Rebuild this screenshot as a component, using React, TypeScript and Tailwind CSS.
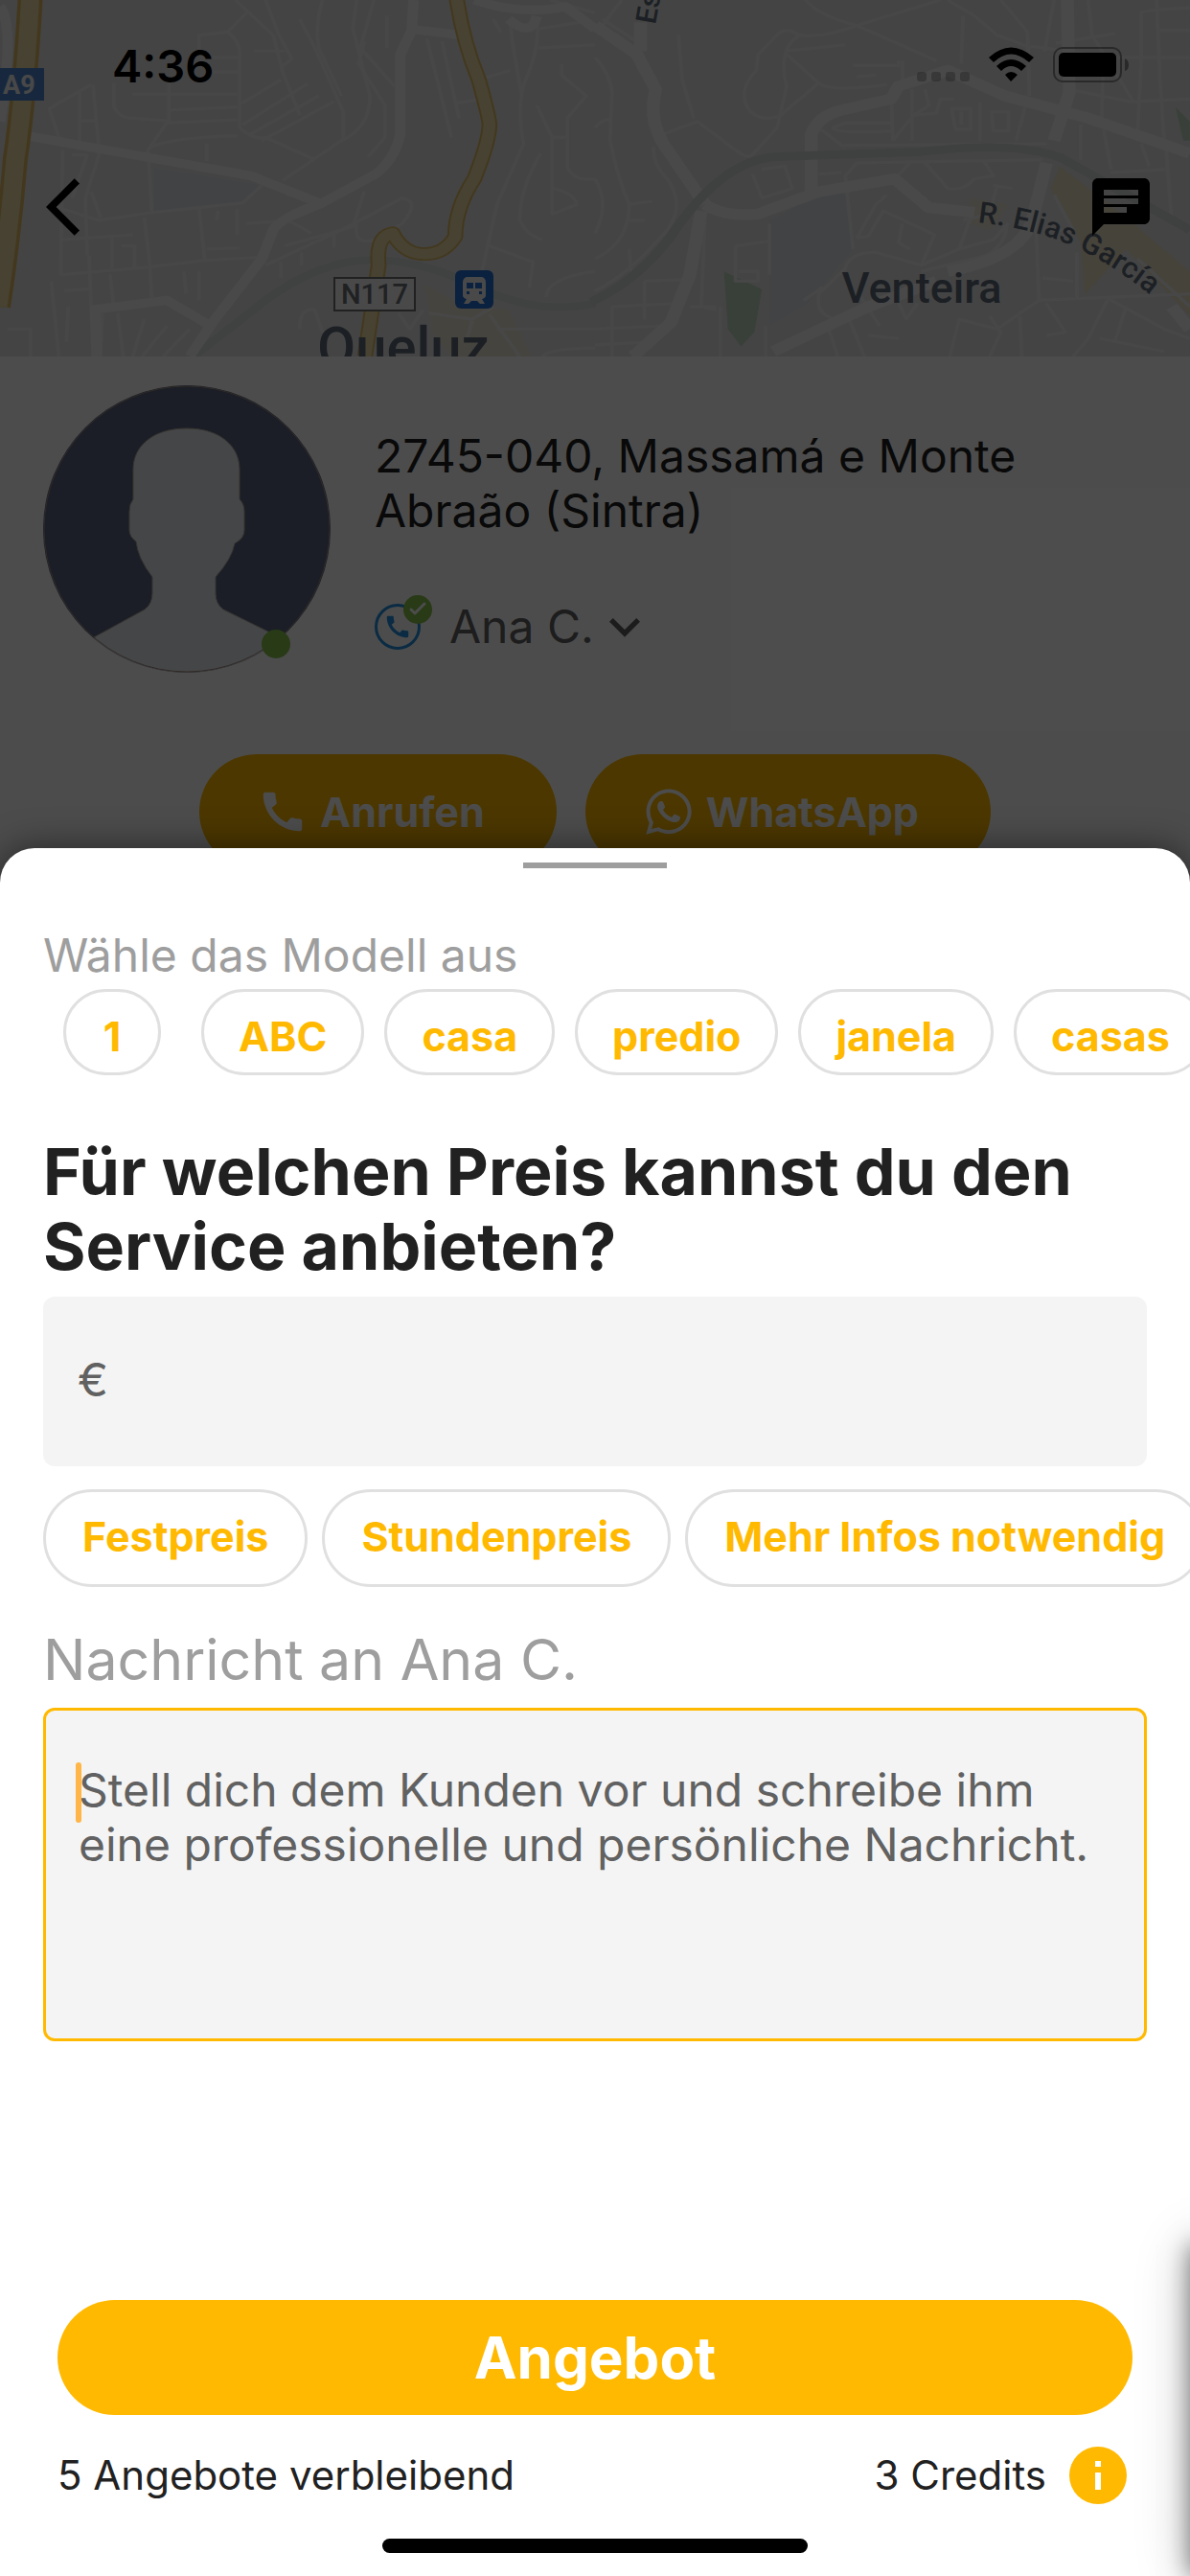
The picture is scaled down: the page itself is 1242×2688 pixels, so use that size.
import { useState } from 'react';
import { MdArrowBackIos, MdCall, MdChat, MdExpandMore } from 'react-icons/md';
import { FaWhatsapp } from 'react-icons/fa';

interface Template {
  id: number;
  label: string;
  text: string;
}

const TEMPLATES: Template[] = [
  { id: 1, label: '1', text: '' },
  { id: 2, label: 'ABC', text: '' },
  { id: 3, label: 'casa', text: '' },
  { id: 4, label: 'predio', text: '' },
  { id: 5, label: 'janela', text: '' },
  { id: 6, label: 'casas', text: '' },
];

const PRICE_TYPES = ['Festpreis', 'Stundenpreis', 'Mehr Infos notwendig'];

// West half of the map
const WEST_MINOR = [
  'M620 0L720 110L745 225L790 360', 'M650 40L600 100L525 110V160', 'M600 100Q635 130 632 180V400Q670 440 700 430L830 500',
  'M700 0L735 110L770 185L740 210', 'M790 60L830 150L905 350V440', 'M850 0Q830 80 840 150L900 300',
  'M940 0L930 90L975 300Q975 400 900 440L745 565', 'M985 0L950 150L1040 270', 'M1020 50V150', 'M960 130L945 200L1015 330V430L970 490',
  'M670 160H750', 'M560 225H630', 'M560 180H630', 'M350 295H625', 'M440 345L625 335', 'M440 385L625 375',
  'M635 325L740 250', 'M640 390L810 262', 'M660 420L840 300', 'M690 440L880 318',
  'M300 260V330Q310 370 350 370L440 378', 'M445 260V375L390 470L400 660', 'M390 465Q440 430 625 425', 'M240 265L130 340L155 430L265 480',
  'M210 290V470', 'M245 265L262 480L225 620L230 800', 'M210 378H255', 'M165 470L160 860', 'M190 485H230L190 620', 'M545 450V505',
  'M130 640L260 690L400 665L640 635L690 580', 'M240 600L265 680', 'M380 680L395 830', 'M525 655L540 815', 'M625 655V735', 'M575 660L570 690',
  'M165 750L350 735', 'M160 860L380 838L540 815L690 805', 'M295 745V840', 'M320 770H355V840', 'M545 780L630 776', 'M170 910L235 905',
  'M135 880L155 1116', 'M180 960L175 1070', 'M235 800L240 960', 'M290 860L300 960', 'M395 840L400 930', 'M485 850L490 920', 'M525 850V940',
  'M20 1030H80V1116', 'M270 980L265 1116', 'M310 980L325 1116', 'M380 1000L350 1116', 'M440 1020L375 1116', 'M500 1030L430 1116',
  'M960 600L930 710L750 770', 'M650 700L760 690L820 730', 'M700 830L900 720L1060 620Q1110 630 1060 700L990 750Q930 770 940 700',
  'M740 820V870', 'M795 790V830', 'M880 730V775', 'M1125 120L1190 430', 'M1165 130L1210 370', 'M1275 245L1345 220', 'M1205 322L1260 312',
  'M1345 60L1350 130L1375 300', 'M1420 150L1568 140', 'M1415 50Q1425 150 1385 250Q1360 330 1380 450L1310 640L1270 850',
  'M1415 330L1455 430V670L1520 640Q1510 600 1455 590', 'M1480 200V235L1545 300L1495 370V520Q1510 570 1568 560',
  'M1425 480Q1370 590 1370 690Q1390 740 1430 750', 'M1455 430H1500', 'M1290 770L1405 820L1395 900', 'M1440 930Q1440 870 1568 850',
  'M1310 1030H1568', 'M1115 970L1080 1030L1050 980', 'M790 1030Q790 960 830 970L850 1040', 'M1130 980L1245 1000L1300 960', 'M1245 1005L1230 1060',
  'M1290 985L1370 1116', 'M1450 0L1568 40', 'M1420 90L1530 70', 'M1430 1116Q1450 1090 1568 1090', 'M1300 60L1320 100',
];
const WEST_MAJOR = [
  'M70 425L400 495L660 550L850 640', 'M1090 0L1085 95L1055 170V420Q1040 500 990 545L850 635Q740 680 720 720L690 810L560 1010L500 1116',
  'M850 635L760 680', 'M240 970L440 940L555 1020', 'M250 960L255 1116', 'M1075 90L1215 110', 'M1250 0Q1380 50 1490 20L1568 90', 'M0 20Q40 80 0 380',
  'M1340 60Q1400 120 1415 50',
];

// East half of the map
const EAST_MINOR = [
  'M555 0Q590 50 690 80L900 190', 'M910 0L690 80Q600 120 540 110Q480 150 505 270L480 400L410 490Q390 490 370 470L270 380L180 420',
  'M540 110Q500 80 480 110L430 170L425 220Q370 290 410 350Q440 380 480 365', 'M500 165L590 260Q620 290 770 265', 'M480 370L590 260',
  'M500 160L660 140', 'M220 110L230 250L260 370', 'M0 180Q40 230 45 290L40 440Q60 560 90 640Q90 760 0 810', 'M20 80L70 0', 'M20 60L110 130',
  'M155 460Q150 510 190 560Q240 640 190 720Q90 860 0 910', 'M0 400Q20 370 40 375', 'M0 560Q40 640 0 730', 'M930 0L1000 50L1060 110L1150 150',
  'M970 50L965 200', 'M1070 0L1140 100L1145 300', 'M1210 0L1185 160', 'M1300 0L1310 110L1420 320', 'M1215 135L1370 105', 'M1150 145L1370 180H1568',
  'M1440 180V40Q1450 30 1568 25', 'M1480 0L1490 260L1500 440', 'M1440 180L1430 420', 'M1490 95H1568', 'M1340 190L1335 380', 'M1250 280L1410 318L1568 310',
  'M780 280L785 440', 'M835 280V440', 'M785 440L840 360L900 355L910 310H945', 'M870 280L880 330L840 360', 'M940 340H990V405H950Z', 'M965 350V390', 'M1015 320V440',
  'M1045 350H1090V410H1050Z', 'M1135 330L1110 440', 'M1110 320L1230 350', 'M625 400L660 385H780', 'M625 400Q640 420 780 410', 'M590 400L650 455L1190 450',
  'M1280 390V500', 'M1340 400L1360 530', 'M1440 450L1460 520', 'M1505 460L1520 700', 'M1360 540L1505 530', 'M660 550L690 510L1180 500', 'M660 550L680 780',
  'M830 510L790 560', 'M870 510L930 590Q970 600 1000 560L1050 550L1025 505', 'M680 205H800V190', 'M690 240L740 235', 'M810 190V250',
  'M415 545L440 620L520 590L500 520L440 530', 'M590 545L650 540', 'M370 770L460 755', 'M370 770V880H430V850H380', 'M460 700V860', 'M290 690L280 960L320 970',
  'M250 960H320', 'M45 960V1116', 'M130 880V1000', 'M0 1030L180 1020', 'M0 1080L150 1070', 'M130 880L235 875', 'M330 960V1116', 'M45 960L210 950',
  'M90 640L150 630', 'M90 690H130', 'M90 780L95 850', 'M690 745L740 640L770 610', 'M690 745L720 740L760 660L895 735L860 830', 'M810 700L800 760L830 780',
  'M990 680L960 780L860 830L740 790Q670 790 660 840L590 920Q580 990 640 1000', 'M1060 580L1040 670L970 690', 'M1050 580L1100 590',
  'M860 850L1030 800Q1080 770 1085 710', 'M960 780L1050 750L1090 700', 'M1160 640L1170 940L1568 920', 'M1170 940L1060 1030L960 1000L935 1116',
  'M1180 870L1260 880', 'M1270 790V930', 'M1345 930L1500 1030L1568 1060', 'M1400 960L1370 1070', 'M1350 940L1300 1060L1260 1116', 'M1190 950L1240 1040L1190 1050',
  'M1120 990L1125 1116', 'M1040 990L1070 1040L1040 1116', 'M820 1000L850 950', 'M700 930L750 1020', 'M790 920L820 1000', 'M670 1000L710 1116', 'M610 1010L640 1116',
  'M720 1050L800 1060', 'M1330 1060L1500 1100', 'M1210 610L1260 720H1200', 'M1430 810L1568 960', 'M450 1020V1116', 'M550 940L600 900',
];
const EAST_MAJOR = [
  'M0 80L110 170L160 280Q140 370 180 450L290 640', 'M120 70V160', 'M290 640Q340 680 430 670L590 600L790 560L880 650L1000 665', 'M570 600V420Q590 360 650 345L780 310L800 270L930 220L1080 300L1300 370L1568 480',
  'M280 660L250 860L200 1010L100 1116', 'M1190 510L1150 700Q1110 810 930 850', 'M470 1100L720 960L900 880', 'M1245 0L1250 290L1210 440', 'M1520 960L1568 1030',
];

function MapView() {
  return (
    <svg aria-hidden="true" className="absolute inset-0 size-full" viewBox="0 0 1242 372" preserveAspectRatio="xMidYMin slice">
      <rect width="1242" height="372" fill="#e4e4e4" />
      <g transform="scale(0.396 0.3333)" fill="none" strokeLinejoin="round">
        <path d="M405 525L690 580L640 635L405 660Z" fill="#dde2e8" />
        <path d="M1120 890L1220 960L1340 970L1400 1116H1190L1140 1040Z" fill="#ece5d2" />
        <path d="M510 1116L700 940Q860 800 1010 815Q1130 820 1290 915Q1430 985 1568 950" stroke="#d6d9db" strokeWidth="24" />
        <g stroke="#efefef" strokeWidth="9">
          {WEST_MINOR.map(d => <path key={d} d={d} />)}
        </g>
        <g stroke="#f3f3f3" strokeWidth="28">
          {WEST_MAJOR.map(d => <path key={d} d={d} />)}
        </g>
        <g stroke="#e0bc64" strokeWidth="42">
          <path d="M80 -10Q65 300 40 500Q25 720 -5 960" strokeWidth="66" />
          <path d="M1203 -10Q1220 130 1262 250Q1290 370 1290 390Q1290 440 1250 560Q1200 650 1200 740Q1170 800 1110 795Q1060 790 1035 730Q990 740 998 830L962 1116" />
        </g>
        <g stroke="#eedca4" strokeWidth="32">
          <path d="M80 -10Q65 300 40 500Q25 720 -5 960" strokeWidth="48" />
          <path d="M1203 -10Q1220 130 1262 250Q1290 370 1290 390Q1290 440 1250 560Q1200 650 1200 740Q1170 800 1110 795Q1060 790 1035 730Q990 740 998 830L962 1116" />
        </g>
      </g>
      <g transform="translate(621 0) scale(0.396 0.3333)" fill="none" strokeLinejoin="round">
        <path d="M460 690L570 620L670 600L675 790L560 950L460 1020Z" fill="#dde2e8" />
        <path d="M340 850L440 905L420 1040L385 1085L350 1030Z" fill="#c0d6c2" />
        <path d="M1530 335L1568 380V440L1550 440Z" fill="#c0d6c2" />
        <path d="M1225 520L1400 680L1568 850V990L1400 780L1290 925L1280 760L1200 590Z" fill="#ece0c6" />
        <path d="M990 620L1090 640L1040 720L990 700Z" fill="#ece5d2" />
        <g stroke="#efefef" strokeWidth="9">
          {EAST_MINOR.map(d => <path key={d} d={d} />)}
        </g>
        <g stroke="#f3f3f3" strokeWidth="34">
          {EAST_MAJOR.map(d => <path key={d} d={d} />)}
        </g>
        <path d="M-10 945Q110 880 200 740Q340 490 490 490L860 475Q1110 440 1230 495L1568 720" stroke="#d3d5d6" strokeWidth="26" />
      </g>

      <rect x="-8" y="71" width="54" height="34" fill="#4f86d0" />
      <rect x="349" y="290" width="84" height="34" fill="#f6f6f6" stroke="#707070" strokeWidth="2" />
      <rect x="475" y="282" width="40" height="40" rx="6" fill="#2470d4" />
      <path d="M487 289H503Q507 290 507 295V308Q507 311 503 312L506 317H501L498 314H492L489 317H484L487 312Q483 311 483 308V295Q483 290 487 289ZM487 295V301H494V295ZM496 295V301H503V295ZM487 304V307H490V304ZM500 304V307H503V304Z" fill="#f6f6f6" fillRule="evenodd" />
      <path id="road-label" d="M1020 232Q1090 240 1130 262Q1170 281 1215 320" fill="none" />
      <g className="font-[Roboto,sans-serif]" fill="#5f6d7a">
        <text x="3" y="98" fontSize="27" fontWeight="700" fill="#f2f2f2">A9</text>
        <text x="391" y="317" fontSize="29" fontWeight="500" fill="#6c7175" textAnchor="middle">N117</text>
        <text x="421" y="382" fontSize="58" fontWeight="500" textAnchor="middle">Queluz</text>
        <text x="962" y="316" fontSize="45" fontWeight="500" textAnchor="middle">Venteira</text>
        <text transform="translate(684 26) rotate(-80)" fontSize="30" fontWeight="500">Es</text>
        <text fontSize="31" fontWeight="500"><textPath href="#road-label">R. Elias García</textPath></text>
      </g>
    </svg>
  );
}

function StatusBar() {
  return (
    <div className="flex h-[132px] items-center justify-between pt-[6px] pr-16 pl-[117px]">
      <span className="text-[47px] leading-[56px] font-semibold text-black">4:36</span>
      <svg aria-hidden="true" className="h-10 w-[224px]" viewBox="0 0 224 40">
        <g fillOpacity="0.22">
          <rect x="3" y="26" width="10" height="10" rx="3" />
          <rect x="18" y="26" width="10" height="10" rx="3" />
          <rect x="33" y="26" width="10" height="10" rx="3" />
          <rect x="48" y="26" width="10" height="10" rx="3" />
        </g>
        <path d="M78 11Q101 -10 125 11L120 16Q101 -1 83 16ZM86 20Q101 6 117 20L112 25Q101 15 91 25ZM95 29Q101 23 108 29L101 36Z" />
        <rect x="146" y="1" width="70" height="35" rx="9" fill="none" stroke="#000" strokeOpacity="0.4" strokeWidth="2" />
        <rect x="151" y="6" width="60" height="25" rx="5" />
        <path d="M220 12Q224 14 224 19Q224 24 220 25Z" fillOpacity="0.4" />
      </svg>
    </div>
  );
}

function Avatar() {
  return (
    <div className="relative size-[300px] shrink-0">
      <svg aria-hidden="true" className="size-full" viewBox="0 0 300 300">
        <clipPath id="avatar-clip"><circle cx="150" cy="150" r="150" /></clipPath>
        <g clipPath="url(#avatar-clip)">
          <rect width="300" height="300" fill="#5a647f" />
          <path
            d="M150 45C184 45 205 63 205 88V119Q210 124 210 132V151Q210 160 200 165Q197 181 180 200V217Q180 228 188 234L247 263V300H53V263L106 234Q114 228 114 217V200Q99 181 97 163Q90 158 90 151V132Q90 124 94 119V88C94 63 115 45 150 45Z"
            fill="#e7e9ed" stroke="#b5aea6" strokeWidth="1"
          />
        </g>
        <circle cx="150" cy="150" r="149" fill="none" stroke="#a08c80" strokeWidth="1" />
      </svg>
      <span className="absolute right-[42px] bottom-[15px] size-[30px] rounded-full bg-[#85c14a]" />
    </div>
  );
}

function Chip({ label, className, onClick }: { label: string; className: string; onClick: () => void }) {
  return (
    <button
      type="button"
      onClick={onClick}
      className={`shrink-0 rounded-full border-[3px] border-[#e0e0e0] bg-white text-[43px] leading-[50px] font-bold whitespace-nowrap text-[#ffb900] ${className}`}
    >
      {label}
    </button>
  );
}

export default function App() {
  const [price, setPrice] = useState('');
  const [message, setMessage] = useState('');
  const [priceType, setPriceType] = useState<string | null>(null);

  return (
    <div className="relative min-h-screen overflow-hidden bg-white font-[Inter,sans-serif]">
      <div className="absolute inset-x-0 top-0">
        <header className="relative h-[372px] overflow-hidden">
          <MapView />
          <div className="relative">
            <StatusBar />
            <div className="flex items-center justify-between pt-12 pr-9 pl-12">
              <button type="button" aria-label="Zurück"><MdArrowBackIos className="size-[72px]" /></button>
              <button type="button" aria-label="Chat"><MdChat className="size-[72px]" /></button>
            </div>
          </div>
        </header>

        <section className="flex gap-[46px] px-[45px] pt-[30px]">
          <Avatar />
          <div className="flex min-w-0 flex-1 flex-col pt-[45px]">
            <h1 className="max-w-[720px] text-[48px] leading-[57px] text-[#212121]">2745-040, Massamá e Monte Abraão (Sintra)</h1>
            <button type="button" className="mt-[60px] flex items-center self-start text-[48px] leading-[66px] text-[#616161]">
              <span className="relative mr-[30px] flex size-12 items-center justify-center rounded-full border-[3px] border-[#2492e0]">
                <MdCall className="size-[30px] text-[#2492e0]" />
                <span className="absolute -top-3 -right-[15px] flex size-[30px] items-center justify-center rounded-full bg-[#85c14a]">
                  <svg aria-hidden="true" className="size-[30px]" viewBox="0 0 30 30">
                    <path d="M8 15L12 19L22 9" fill="none" stroke="#fff" strokeWidth="3" strokeLinecap="round" strokeLinejoin="round" />
                  </svg>
                </span>
              </span>
              Ana C.
              <MdExpandMore className="size-16 text-[#606060]" />
            </button>
          </div>
        </section>

        <div className="mt-[85px] flex justify-center gap-[30px]">
          <button type="button" className="flex h-[120px] items-center gap-3 rounded-full bg-[#ffb900] pr-[75px] pl-[60px] text-[43px] leading-[50px] font-bold text-white">
            <MdCall className="size-[54px]" />
            Anrufen
          </button>
          <button type="button" className="flex h-[120px] items-center gap-3 rounded-full bg-[#ffb900] pr-[75px] pl-[60px] text-[43px] leading-[50px] font-bold text-white">
            <FaWhatsapp className="size-[54px]" />
            WhatsApp
          </button>
        </div>
      </div>

      <div className="absolute inset-0 bg-black/70" />

      <div className="relative flex min-h-screen flex-col pt-[885px]">
        <main className="flex flex-1 flex-col rounded-t-[36px] bg-white pt-[15px] pb-6 shadow-[0_0_36px_rgba(0,0,0,0.5)]">
          <div className="mx-auto h-[6px] w-[150px] bg-[#9e9e9e]" />

          <p className="mt-[62px] px-[45px] text-[48px] leading-[57px] text-[#9e9e9e]">Wähle das Modell aus</p>
          <div className="mt-[7px] flex gap-[21px] overflow-hidden pl-[66px]">
            {TEMPLATES.map(t => (
              <Chip
                key={t.id}
                label={t.label}
                onClick={() => setMessage(t.text)}
                className={`h-[90px] pt-2 ${t.label.length === 1 ? 'mr-[21px] w-[102px]' : 'px-9'}`}
              />
            ))}
          </div>

          <label htmlFor="price" className="mt-[61px] px-[45px] text-[68px] leading-[78px] font-bold text-[#212121]">
            Für welchen Preis kannst du den Service anbieten?
          </label>
          <input
            id="price"
            value={price}
            onChange={e => setPrice(e.target.value)}
            placeholder="€"
            className="mx-[45px] mt-[14px] h-[177px] rounded-xl bg-[#f4f4f4] px-9 pb-1 text-[48px] text-[#212121] outline-none placeholder:text-[#616161]"
          />

          <div className="mt-6 flex gap-[15px] overflow-hidden pl-[45px]">
            {PRICE_TYPES.map(p => (
              <Chip key={p} label={p} onClick={() => setPriceType(p === priceType ? null : p)} className="h-[102px] px-[38px] pb-1" />
            ))}
          </div>

          <label htmlFor="message" className="mt-[38px] px-[45px] text-[59px] leading-[76px] text-[#9e9e9e]">
            Nachricht an Ana C.
          </label>
          <div className="relative mx-[45px] mt-3">
            <textarea
              id="message"
              value={message}
              onChange={e => setMessage(e.target.value)}
              placeholder="Stell dich dem Kunden vor und schreibe ihm eine professionelle und persönliche Nachricht."
              className="block h-[348px] w-full resize-none rounded-xl border-[3px] border-[#ffb900] bg-[#f4f4f4] px-[34px] pt-[54px] text-[48px] leading-[57px] text-[#212121] outline-none placeholder:text-[#616161]"
            />
            <span className="absolute top-[57px] left-[34px] h-[63px] w-[6px] rounded-full bg-[#ffb547]" />
          </div>

          <div className="mt-auto px-[60px]">
            <button type="button" className="h-[120px] w-full rounded-full bg-[#ffb900] text-[60px] leading-[72px] font-bold text-white">Angebot</button>
            <div className="mt-[33px] flex h-[60px] items-center justify-between pr-[6px] text-[42px] leading-[50px] text-[#212121]">
              <span>5 Angebote verbleibend</span>
              <span className="flex items-center gap-6">
                3 Credits
                <button type="button" aria-label="Info">
                  <svg aria-hidden="true" className="size-[60px]" viewBox="0 0 60 60">
                    <circle cx="30" cy="30" r="30" fill="#ffb900" />
                    <path d="M27 15H33V21H27ZM27 27H33V45H27Z" fill="#fff" />
                  </svg>
                </button>
              </span>
            </div>
          </div>
          <div className="mx-auto mt-9 h-[15px] w-[444px] rounded-full bg-black" />
        </main>
      </div>

      <div className="absolute -right-20 bottom-0 h-[345px] w-20 shadow-[0_0_24px_rgba(0,0,0,0.5),0_0_60px_rgba(0,0,0,0.2)]" />
    </div>
  );
}
